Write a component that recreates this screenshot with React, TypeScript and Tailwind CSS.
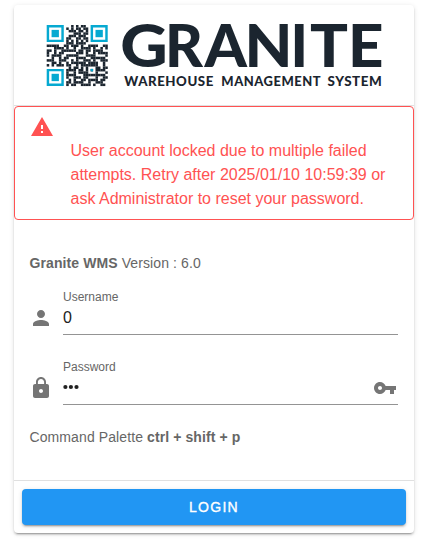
import React from "react";

const QR = [
  "0000000000101011000000000",
  "0000000010101101100000000",
  "0000000001110110100000000",
  "0000000000011101100000000",
  "0000000001110111000000000",
  "0000000011001101100000000",
  "0000000010101010100000000",
  "0000000011101111000000000",
  "1111100110111010011110011",
  "0001111010010011110100101",
  "1101001111110110110111100",
  "1001011000001110100101111",
  "1011110011111000111100001",
  "0010010110001111001111110",
  "1110011100101001110100111",
  "0011010010111111011110010",
  "1010111011001011111110010",
  "0000000001011010100011011",
  "0000000011110110101011110",
  "0000000010010111100010001",
  "0000000011110001111111110",
  "0000000010011101100010011",
  "0000000001010011011110110",
  "0000000011011110010011100",
  "0000000010110011110100110",
];

const LETTERS: [string, number, number][] = [
  ["G", 120.3, 47.5],
  ["R", 165, 38],
  ["A", 204.5, 42.5],
  ["N", 244.5, 48],
  ["I", 290.5, 17.5],
  ["T", 310, 38],
  ["E", 348, 35.5],
];

function Finder({ x, y }: { x: number; y: number }) {
  return (
    <g fill="#06a9d1">
      <path fillRule="evenodd" d={`M${x} ${y}h7v7h-7zM${x + 1} ${y + 1}v5h5v-5z`} />
      <rect x={x + 2} y={y + 2} width="3" height="3" />
    </g>
  );
}

function Logo() {
  return (
    <svg className="block h-[101px] w-[400px] shrink-0" viewBox="14 5 400 101">
      <g transform="translate(46.7 25) scale(2.44)">
        {QR.map((row, y) =>
          row.split("").map((c, x) =>
            c === "1" ? <rect key={`${x}-${y}`} x={x} y={y} width="1.03" height="1.03" fill="#1b252f" /> : null
          )
        )}
        <Finder x={0} y={0} />
        <Finder x={18} y={0} />
        <Finder x={0} y={18} />
        <rect x="18" y="18" width="1" height="1" fill="#06a9d1" />
      </g>
      <g fill="#1b252f" fontFamily="Lato, sans-serif" fontWeight="900">
        {LETTERS.map(([c, x, w]) => (
          <text key={c} x={x} y="67" fontSize="58.5" textLength={w} lengthAdjust="spacingAndGlyphs">{c}</text>
        ))}
        <g fontSize="12.2" letterSpacing="0.5">
          <text x="124.3" y="86" textLength="89.5" lengthAdjust="spacingAndGlyphs">WAREHOUSE</text>
          <text x="221.3" y="86" textLength="99.8" lengthAdjust="spacingAndGlyphs">MANAGEMENT</text>
          <text x="327.5" y="86" textLength="54.8" lengthAdjust="spacingAndGlyphs">SYSTEM</text>
        </g>
      </g>
      <path d="M14 105.5h400" stroke="#e0e0e0" />
    </svg>
  );
}

function Icon({ d, className }: { d: string; className: string }) {
  return (
    <svg viewBox="0 0 24 24" fill="currentColor" className={`h-6 w-6 shrink-0 ${className}`}>
      <path d={d} />
    </svg>
  );
}

const WARNING = "M1 21h22L12 2 1 21zm12-3h-2v-2h2v2zm0-4h-2v-4h2v4z";
const PERSON = "M12 12c2.21 0 4-1.79 4-4s-1.79-4-4-4-4 1.79-4 4 1.79 4 4 4zm0 2c-2.67 0-8 1.34-8 4v2h16v-2c0-2.66-5.33-4-8-4z";
const LOCK = "M18 8h-1V6c0-2.76-2.24-5-5-5S7 3.24 7 6v2H6c-1.1 0-2 .9-2 2v10c0 1.1.9 2 2 2h12c1.1 0 2-.9 2-2V10c0-1.1-.9-2-2-2zm-6 9c-1.1 0-2-.9-2-2s.9-2 2-2 2 .9 2 2-.9 2-2 2zm3.1-9H8.9V6c0-1.71 1.39-3.1 3.1-3.1s3.1 1.39 3.1 3.1v2z";
const KEY = "M12.65 10C11.83 7.67 9.61 6 7 6c-3.31 0-6 2.69-6 6s2.69 6 6 6c2.61 0 4.83-1.67 5.65-4H17v4h4v-4h2v-4H12.65zM7 14c-1.1 0-2-.9-2-2s.9-2 2-2 2 .9 2 2-.9 2-2 2z";

function Field({ icon, label, children }: { icon: string; label: string; children: React.ReactNode }) {
  return (
    <div className="flex h-[50px] gap-[10px]">
      <Icon d={icon} className="-ml-px mt-[21px] text-[#757575]" />
      <div className="flex-1 border-b border-[#949494]">
        <div className="pt-[4px] text-xs leading-4 text-[#666]">{label}</div>
        <div className="flex h-[26px] items-center justify-between text-base text-[#212121]">{children}</div>
      </div>
    </div>
  );
}

export default function App() {
  return (
    <div className="h-[550px] w-[426px] bg-white pt-[5px] pl-[14px] font-['Liberation_Sans',Arial,sans-serif]">
      <main className="flex h-[528px] w-[400px] flex-col rounded bg-white shadow-[0_3px_1px_-2px_rgba(0,0,0,0.2),0_2px_2px_0_rgba(0,0,0,0.14),0_1px_5px_0_rgba(0,0,0,0.12)]">
        <Logo />
        <div className="h-[114px] shrink-0 rounded border border-[#ff5252] pt-[8px] pl-[15.5px] text-[#ff5252]">
          <Icon d={WARNING} className="-ml-[0.5px]" />
          <p className="pl-[40px] text-base leading-6">
            User account locked due to multiple failed<br />
            attempts. Retry after 2025/01/10 10:59:39 or<br />
            ask Administrator to reset your password.
          </p>
        </div>
        <section className="h-[260px] shrink-0 px-4 pt-[33px] text-sm leading-5 text-[#666]">
          <p className="mb-[10px] -ml-[0.5px] tracking-[0.1px]"><b>Granite WMS</b> Version : 6.0</p>
          <div className="flex flex-col gap-5 pt-[2px]">
            <Field icon={PERSON} label="Username">0</Field>
            <Field icon={LOCK} label="Password">
              <svg className="-mt-[2px] h-[6px] w-[17px]" viewBox="0 0 17 6" fill="currentColor">
                <circle cx="2.4" cy="3" r="2.1" />
                <circle cx="7.9" cy="3" r="2.1" />
                <circle cx="13.5" cy="3" r="2.1" />
              </svg>
              <Icon d={KEY} className="mr-px text-[#757575]" />
            </Field>
          </div>
          <p className="mt-[22px] -ml-[0.5px] tracking-[0.1px]">Command Palette <b>ctrl + shift + p</b></p>
        </section>
        <footer className="flex-1 border-t border-[#e0e0e0] p-2">
          <button className="h-9 w-full rounded bg-[#2196f3] text-sm font-medium tracking-[1.25px] text-white [-webkit-text-stroke:0.35px_white] shadow-[0_3px_1px_-2px_rgba(0,0,0,0.2),0_2px_2px_0_rgba(0,0,0,0.14),0_1px_5px_0_rgba(0,0,0,0.12)]">LOGIN</button>
        </footer>
      </main>
    </div>
  );
}
